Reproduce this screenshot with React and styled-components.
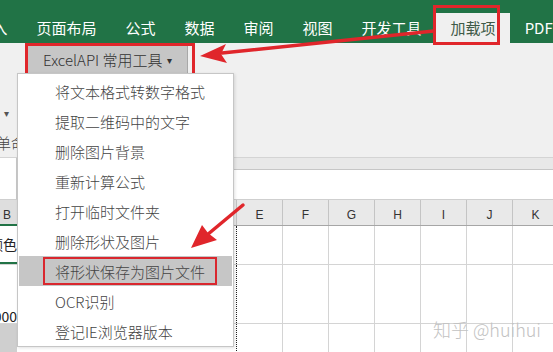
import React from 'react';
import styled, { createGlobalStyle } from 'styled-components';


// data:

const tabs = ['入', '页面布局', '公式', '数据', '审阅', '视图', '开发工具', '加载项', 'PDF'];
const activeTab = '加载项';

const menuItems = [
    '将文本格式转数字格式',
    '提取二维码中的文字',
    '删除图片背景',
    '重新计算公式',
    '打开临时文件夹',
    '删除形状及图片',
    '将形状保存为图片文件',
    'OCR识别',
    '登记IE浏览器版本'
];
const pickedItem = '将形状保存为图片文件';

const columns = ['E', 'F', 'G', 'H', 'I', 'J', 'K'];

const rows = [
    { height: 39, left: '颜色', align: 'center', selected: true },
    { height: 59, left: '000', align: 'flex-end' },
    { height: 40, left: '', shaded: true }
];


// component:

const App = () => (
    <Page>
        <GlobalStyle />

        <TabBar>
            {tabs.map(tab => (
                <Tab key={tab} active={tab === activeTab}>{tab}</Tab>
            ))}
        </TabBar>

        <RibbonBody>
            <LeftStub>
                <StubCaret>▾</StubCaret>
                <StubText>单命令</StubText>
            </LeftStub>
            <ButtonFrame>
                <ToolButton>
                    ExcelAPI 常用工具
                    <Caret>▾</Caret>
                </ToolButton>
            </ButtonFrame>
        </RibbonBody>

        <FormulaSection>
            <NameBox />
            <FormulaArea>
                <FormulaBand />
                <FormulaInput />
            </FormulaArea>
        </FormulaSection>

        <HeaderRow>
            <HeaderB>B</HeaderB>
            <HiddenHeader />
            {columns.map(col => (
                <HeaderCell key={col}>{col}</HeaderCell>
            ))}
            <HeaderRest />
        </HeaderRow>

        {rows.map((row, i) => (
            <GridRow key={i} style={{ height: row.height }}>
                <LeftCell align={row.align} selected={row.selected} shaded={row.shaded}>
                    {row.left}
                </LeftCell>
                <HiddenCell />
                {columns.map(col => (
                    <GridCell key={col} />
                ))}
            </GridRow>
        ))}

        <Menu>
            {menuItems.map(item => (
                <MenuItem key={item} picked={item === pickedItem}>
                    {item === pickedItem ? <PickedText>{item}</PickedText> : item}
                </MenuItem>
            ))}
        </Menu>

        <Watermark>知乎 @huihui</Watermark>

        <Arrows width="553" height="352" viewBox="0 0 553 352">
            <line x1="434" y1="31" x2="222" y2="53" stroke="#e0262b" strokeWidth="3.5" strokeLinecap="round" />
            <polygon points="200,56 226,44 221,54 227,63" fill="#e0262b" />
            <line x1="243" y1="205" x2="207" y2="235" stroke="#e0262b" strokeWidth="3.5" strokeLinecap="round" />
            <polygon points="191,248 202,225 208,233 217,240" fill="#e0262b" />
        </Arrows>
    </Page>
);


// styled components:

const GlobalStyle = createGlobalStyle`
    html, body {
        margin: 0;
        padding: 0;
        background: #ffffff;
    }
    body {
        font-family: "Noto Sans CJK SC", "Noto Sans", sans-serif;
        font-weight: 300;
    }
`;

const Page = styled.div`
    position: relative;
    width: 553px;
    height: 352px;
    overflow: hidden;
    background: #ffffff;
`;

const TabBar = styled.div`
    position: relative;
    z-index: 2;
    display: flex;
    align-items: flex-end;
    height: 43px;
    margin-left: -22px;
    background: #217346;
`;

const Tab = styled.div`
    position: relative;
    flex: none;
    height: 30px;
    padding: 0 14.5px;
    line-height: 30px;
    font-size: 15px;
    font-weight: 400;
    white-space: nowrap;
    color: ${p => (p.active ? '#3f5a48' : '#ffffff')};
    background: ${p => (p.active ? '#f0f0f0' : 'transparent')};

    ${p => p.active && `
        &::after {
            content: '';
            position: absolute;
            left: -3px;
            top: -8px;
            width: 67px;
            height: 40px;
            box-sizing: border-box;
            border: 3px solid #e0262b;
        }
    `}
`;

const RibbonBody = styled.div`
    display: flex;
    align-items: flex-start;
    height: 114px;
    background: #f0f0f0;
`;

const LeftStub = styled.div`
    display: flex;
    flex-direction: column;
    width: 17px;
    overflow: hidden;
    padding-top: 62px;
`;

const StubCaret = styled.div`
    height: 16px;
    line-height: 16px;
    padding-left: 4px;
    font-size: 10px;
    color: #555555;
`;

const StubText = styled.div`
    margin-top: 12px;
    margin-left: -4px;
    height: 20px;
    line-height: 20px;
    font-size: 15px;
    color: #444444;
    white-space: nowrap;
`;

const ButtonFrame = styled.div`
    display: flex;
    margin-left: 8px;
    padding: 0 4px 0 0;
    border: 3px solid #e0262b;
`;

const ToolButton = styled.div`
    display: flex;
    align-items: center;
    width: 160px;
    height: 27px;
    padding-left: 15px;
    box-sizing: border-box;
    border-right: 1px solid #a8a8a8;
    background: #c6c6c6;
    font-size: 15px;
    color: #333333;
    white-space: nowrap;
`;

const Caret = styled.span`
    margin-left: 4px;
    font-size: 10px;
    color: #333333;
`;

const FormulaSection = styled.div`
    display: flex;
    height: 43px;
    box-sizing: border-box;
    border-top: 1px solid #d4d4d4;
    border-bottom: 1px solid #cfcfcf;
    background: #f0f0f0;
`;

const NameBox = styled.div`
    width: 16px;
    border-right: 1px solid #c8c8c8;
    background: #ffffff;
`;

const FormulaArea = styled.div`
    flex: 1;
    display: flex;
    flex-direction: column;
`;

const FormulaBand = styled.div`
    height: 11px;
    background: #e8e8e8;
    border-bottom: 1px solid #c6c6c6;
`;

const FormulaInput = styled.div`
    flex: 1;
    background: #ffffff;
`;

const HeaderRow = styled.div`
    display: flex;
    height: 26px;
    box-sizing: border-box;
    background: #e9e9e9;
    border-bottom: 1px solid #a6a6a6;
    font-family: "Liberation Sans", Arial, sans-serif;
    font-weight: 400;
    font-size: 12px;
    color: #333333;
`;

const HeaderB = styled.div`
    flex: none;
    width: 17px;
    padding: 0 0 2px 3px;
    box-sizing: border-box;
    display: flex;
    align-items: flex-end;
    background: #dedede;
    border-bottom: 2px solid #217346;
    margin-bottom: -1px;
`;

const HiddenHeader = styled.div`
    flex: none;
    width: 220px;
    box-sizing: border-box;
    border-right: 1px solid #c4c4c4;
`;

const HeaderCell = styled.div`
    flex: none;
    width: 46px;
    box-sizing: border-box;
    display: flex;
    align-items: flex-end;
    justify-content: center;
    padding-bottom: 3px;
    border-right: 1px solid #c4c4c4;
`;

const HeaderRest = styled.div`
    flex: 1;
`;

const GridRow = styled.div`
    display: flex;
    box-sizing: border-box;
    border-bottom: 1px solid #d4d4d4;
`;

const LeftCell = styled.div`
    flex: none;
    width: 17px;
    box-sizing: border-box;
    display: flex;
    justify-content: flex-end;
    align-items: ${p => p.align || 'center'};
    overflow: hidden;
    white-space: nowrap;
    font-size: 14px;
    font-weight: 400;
    line-height: 14px;
    color: #222222;
    background: ${p => (p.shaded ? '#cfcfcf' : '#ffffff')};
    border-bottom: ${p => (p.selected ? '2px solid #217346' : 'none')};
`;

const HiddenCell = styled.div`
    flex: none;
    width: 220px;
    box-sizing: border-box;
    border-right: 1px dotted #222222;
`;

const GridCell = styled.div`
    flex: none;
    width: 46px;
    box-sizing: border-box;
    border-right: 1px solid #d4d4d4;
`;

const Menu = styled.div`
    position: absolute;
    z-index: 5;
    left: 17px;
    top: 73px;
    width: 217px;
    box-sizing: border-box;
    padding: 2px 1px 0 1px;
    background: #ffffff;
    border: 1px solid #c6c6c6;
    box-shadow: 1px 1px 3px rgba(0, 0, 0, 0.12);
`;

const MenuItem = styled.div`
    display: flex;
    align-items: center;
    height: 30px;
    padding-left: 36px;
    font-size: 15px;
    color: #444444;
    white-space: nowrap;
    background: ${p => (p.picked ? '#c6c6c6' : 'transparent')};
`;

const PickedText = styled.span`
    display: flex;
    align-items: center;
    height: 28px;
    box-sizing: border-box;
    margin-left: -12px;
    padding: 0 10px;
    border: 2px solid #d9272e;
`;

const Watermark = styled.div`
    position: absolute;
    z-index: 6;
    left: 433px;
    top: 316px;
    font-size: 18px;
    color: #c2c2c2;
    white-space: nowrap;
`;

const Arrows = styled.svg`
    position: absolute;
    z-index: 10;
    left: 0;
    top: 0;
    pointer-events: none;
`;

export default App;
